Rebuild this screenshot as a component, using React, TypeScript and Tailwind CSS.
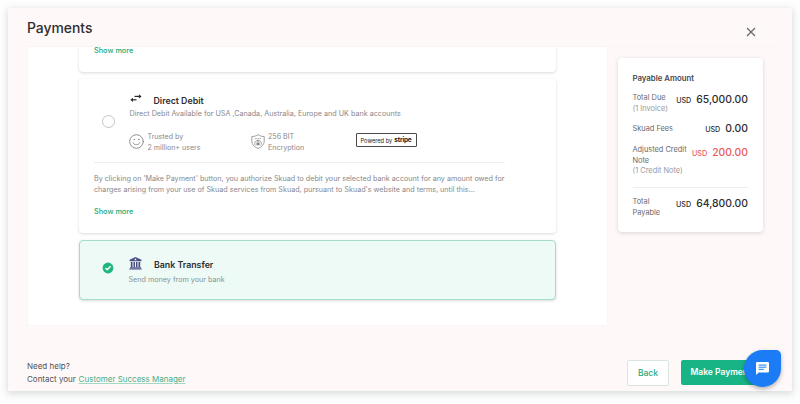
import React from "react";

function SwapArrows() {
  return (
    <svg width="12" height="9" viewBox="0 0 12 9" fill="none" stroke="#2b2b30" strokeWidth="1.2" className="block">
      <path d="M4.5 2.4H10" />
      <path d="M8.9 0.3L11.6 2.4L8.9 4.5Z" fill="#2b2b30" stroke="none" />
      <path d="M2 5.8H6.5" />
      <path d="M3 3.7L0.3 5.8L3 7.9Z" fill="#2b2b30" stroke="none" />
    </svg>
  );
}

function Smiley() {
  return (
    <svg width="15" height="15" viewBox="0 0 15 15" fill="none" stroke="#85858a" strokeWidth="0.9" strokeLinecap="round" className="block">
      <circle cx="7.5" cy="7.5" r="6.8" />
      <path d="M4.2 8.8C5 11.4 10 11.4 10.8 8.8" />
      <circle cx="5.2" cy="5.6" r="0.3" fill="#85858a" />
      <circle cx="9.8" cy="5.6" r="0.3" fill="#85858a" />
    </svg>
  );
}

function Shield() {
  return (
    <svg width="14" height="15" viewBox="0 0 14 15" fill="none" stroke="#85858a" strokeWidth="0.8" strokeLinejoin="round" className="block">
      <path d="M7 0.6C8.5 1.9 10.8 2.5 13.2 2.5V7C13.2 10.8 10.4 13.2 7 14.4C3.6 13.2 0.8 10.8 0.8 7V2.5C3.2 2.5 5.5 1.9 7 0.6Z" />
      <path d="M3.6 4.7H10.4" strokeDasharray="1.2 0.5" />
      <path d="M4.2 11.4C3 9 4 6.6 7 6.4C10 6.6 11 9 9.8 11.4" />
      <rect x="5.5" y="8.9" width="3" height="2.4" fill="#85858a" stroke="none" />
      <path d="M6.1 8.9V8.2C6.1 7.2 7.9 7.2 7.9 8.2V8.9" />
    </svg>
  );
}

function Bank() {
  return (
    <svg width="13" height="13" viewBox="0 0 13 13" fill="#4c4c82" className="block">
      <path fillRule="evenodd" d="M6.5 0L12.4 2.8V4.2H0.6V2.8ZM6.5 1.5A0.9 0.9 0 1 0 6.5 3.3A0.9 0.9 0 1 0 6.5 1.5Z" />
      <path d="M1.8 4.9H3.5V10H1.8ZM4.5 4.9H6V10H4.5ZM7 4.9H8.5V10H7ZM9.5 4.9H11.2V10H9.5ZM1 10.3H12V11.2H1ZM0.3 11.5H12.7V12.6H0.3Z" />
    </svg>
  );
}

function Amount({ value, className }: { value: string; className: string }) {
  return (
    <div className={`flex items-baseline whitespace-nowrap leading-[14px] ${className}`}>
      <span className="text-[7.2px] font-medium">USD</span>
      <span className="ml-[5px] text-[10.4px] font-medium">{value}</span>
    </div>
  );
}

export default function App() {
  return (
    <div className="h-[404px] w-[800px] overflow-hidden bg-[#fefefe] px-2 pt-2 font-['Inter',sans-serif] text-[#2d2d31]">
      <main className="relative flex h-[383px] w-[784px] flex-col bg-[#fef9f8] shadow-[0_2px_7px_1px_rgba(70,90,90,0.2)]">
        <header className="mx-[19px] flex h-[39px] shrink-0 items-start justify-between border-b border-[#faf4f3]">
          <h1 className="mt-[10px] text-[13.9px] leading-[20px] font-medium">Payments</h1>
          <svg width="10" height="10" viewBox="0 0 10 10" stroke="#66666a" strokeWidth="1.2" className="mt-[19px] mr-[17px]">
            <path d="M1 1L9 9M9 1L1 9" />
          </svg>
        </header>

        <div className="ml-[19px] flex h-[279px] shrink-0">
          <section className="flex w-[581px] flex-col border-x border-b border-[#f9f6f5] bg-white pl-[51px]">
            <div className="h-[25px] w-[477px] rounded-b-[4px] bg-white pl-[15px] text-[7.3px] leading-[8px] font-medium text-[#25a778] shadow-[0_1px_3px_rgba(0,0,0,0.15)] [clip-path:inset(0_-5px_-5px_-5px)]">
              Show more
            </div>

            <div className="mt-[7px] flex h-[154px] w-[477px] flex-col rounded-[4px] bg-white px-[15px] shadow-[0_1px_3px_rgba(0,0,0,0.15)]">
              <div className="flex h-[84px] w-[411px] border-b border-[#eeeeef] pl-[8px]">
                <div className="mt-[36px] h-[13px] w-[13px] shrink-0 rounded-full border border-[#c4c4c7]" />
                <div className="ml-[14.5px] pt-[15px]">
                  <div className="flex h-[14px]">
                    <SwapArrows />
                    <h2 className="ml-[12px] text-[8.8px] leading-[14px] font-semibold whitespace-nowrap">Direct Debit</h2>
                  </div>
                  <p className="text-[7.2px] leading-[11px] whitespace-nowrap text-[#88888c]">
                    Direct Debit Available for USA ,Canada, Australia, Europe and UK bank accounts
                  </p>
                  <div className="mt-[12px] -ml-[0.5px] flex text-[7.1px] leading-[11px] text-[#88888c]">
                    <div className="flex w-[122px] gap-[3.5px]">
                      <div className="mt-[3px]"><Smiley /></div>
                      <p>Trusted by<br />2 million+ users</p>
                    </div>
                    <div className="flex w-[104.5px] gap-[3px]">
                      <div className="mt-[3px]"><Shield /></div>
                      <p>256 BIT<br />Encryption</p>
                    </div>
                    <div className="mt-[2px] flex h-[14px] w-[61px] items-center justify-center gap-[2px] rounded-[1px] border border-[#4a4a4d] text-[5.7px] whitespace-nowrap text-[#222]">
                      <span>Powered by</span>
                      <b className="text-[6.5px] tracking-[-0.2px]">stripe</b>
                    </div>
                  </div>
                </div>
              </div>
              <p className="mt-[10px] text-[7.2px] leading-[11px] whitespace-nowrap text-[#88888c]">
                By clicking on &apos;Make Payment&apos; button, you authorize Skuad to debit your selected bank account for any amount owed for<br />
                charges arising from your use of Skuad services from Skuad, pursuant to Skuad&apos;s website and terms, until this...
              </p>
              <a className="mt-[11px] text-[7.3px] leading-[11px] font-medium text-[#25a778]">Show more</a>
            </div>

            <div className="mt-[7px] flex h-[60px] w-[477px] rounded-[4px] border border-[#a5dcc9] bg-[#edfaf6] pl-[22px] shadow-[0_1px_3px_rgba(0,0,0,0.15)]">
              <svg width="12" height="12" viewBox="0 0 12 12" className="mt-[21px]">
                <circle cx="6" cy="6" r="5.4" fill="#1fb57f" />
                <path d="M3.4 6.1L5.2 7.8L8.6 4.3" fill="none" stroke="#fff" strokeWidth="1.4" />
              </svg>
              <div className="ml-[14.5px] pt-[16px]">
                <div className="flex h-[16px]">
                  <Bank />
                  <h2 className="ml-[12.5px] text-[8.8px] leading-[16px] font-semibold">Bank Transfer</h2>
                </div>
                <p className="text-[7.2px] leading-[13px] text-[#8a9292]">Send money from your bank</p>
              </div>
            </div>
          </section>

          <aside className="mt-[11px] ml-[10px] h-[174px] w-[145px] rounded-[4px] bg-white pt-[15px] pr-[15px] pl-[14.5px] text-[7.4px] leading-[10.5px] text-[#69696d] shadow-[0_1px_4px_rgba(0,0,0,0.15)]">
            <h2 className="text-[7.8px] leading-[11px] font-semibold text-[#48484c]">Payable Amount</h2>
            <div className="mt-[9px] flex h-[31px] justify-between">
              <p>Total Due<br /><span className="text-[#99999c]">(1 Invoice)</span></p>
              <Amount value="65,000.00" className="text-[#2d2d31]" />
            </div>
            <div className="flex h-[21px] justify-between">
              <p>Skuad Fees</p>
              <Amount value="0.00" className="-mt-[2px] text-[#2d2d31]" />
            </div>
            <div className="flex h-[43px] justify-between border-b border-[#eeeeef]">
              <p className="whitespace-nowrap">Adjusted Credit<br />Note<br /><span className="text-[#99999c]">(1 Credit Note)</span></p>
              <Amount value="200.00" className="mt-[1px] text-[#e65b5b]" />
            </div>
            <div className="mt-[9px] flex justify-between">
              <p>Total<br />Payable</p>
              <Amount value="64,800.00" className="text-[#2d2d31]" />
            </div>
          </aside>
        </div>

        <footer className="mx-[19px] mt-[26px] flex h-[39px] items-start justify-between border-t border-[#fbf7f5]">
          <p className="mt-[7px] text-[8px] leading-[13px] text-[#505054]">
            Need help?<br />
            Contact your <a className="ml-[0.5px] text-[#48ad89] underline decoration-[#a5d8c5] decoration-[0.5px] underline-offset-1">Customer Success Manager</a>
          </p>
          <div className="mt-[7px] mr-[9px] flex gap-[12px]">
            <button className="h-[26px] w-[42px] rounded-[2px] border border-[#d9e5df] bg-white text-[8.5px] font-medium text-[#2aa779]">Back</button>
            <button className="h-[25px] w-[83px] rounded-[2px] bg-[#18b486] pl-[9.5px] text-left text-[8.5px] font-semibold whitespace-nowrap text-white">Make Payment</button>
          </div>
        </footer>

        <div className="absolute top-[342px] left-[736px] flex h-[37px] w-[37px] items-center justify-center rounded-[18.5px] rounded-tr-[5px] bg-[#1b7cf5] shadow-[0_2px_4px_rgba(0,0,0,0.3)]">
          <svg width="13" height="13" viewBox="0 0 13 13">
            <path d="M1.2 0H11.8Q13 0 13 1.2V9.2Q13 10.4 11.8 10.4H2.6L0 13V1.2Q0 0 1.2 0Z" fill="#fff" />
            <path d="M2.6 3.1H10.4M2.6 5.2H10.4M2.6 7.3H7.8" stroke="#1b7cf5" strokeWidth="1" />
          </svg>
        </div>
      </main>
    </div>
  );
}
